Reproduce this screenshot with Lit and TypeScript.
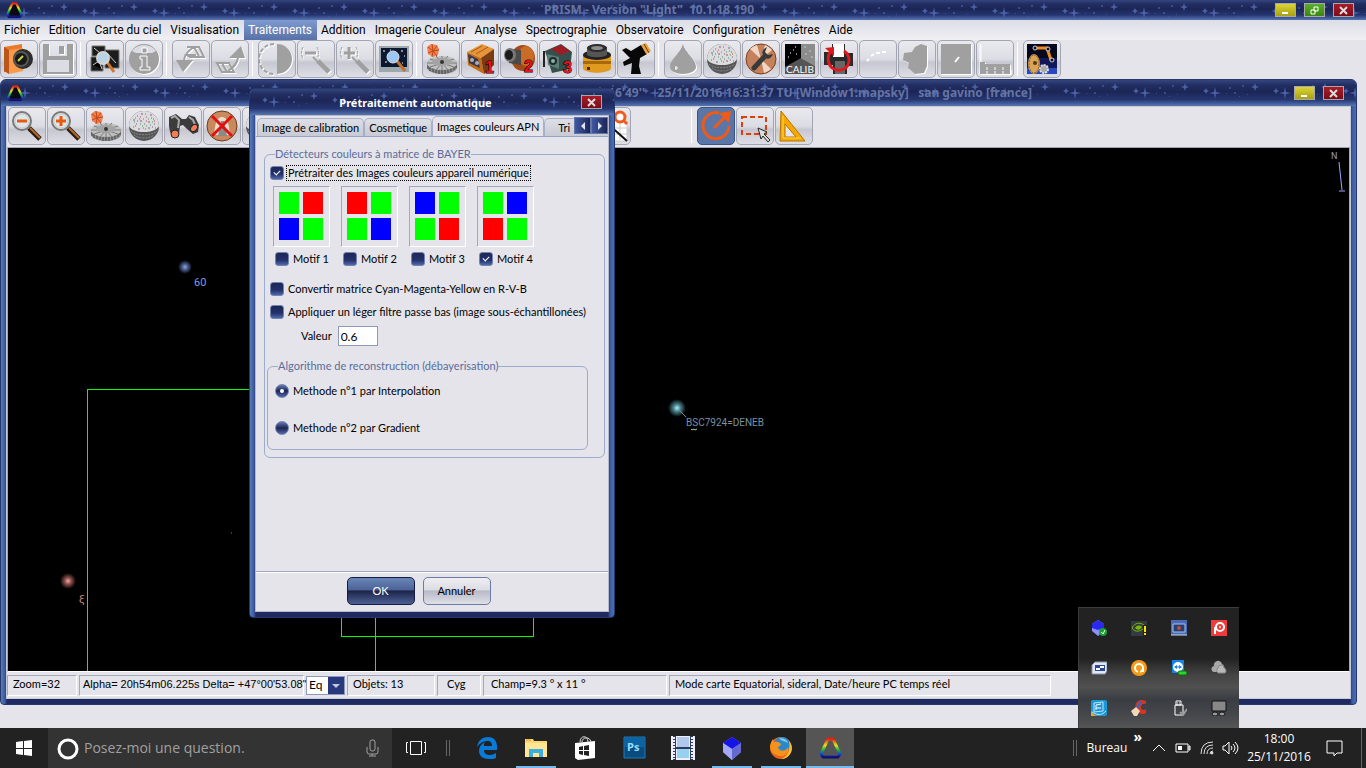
import { LitElement, html, svg, css } from 'lit'
import type { SVGTemplateResult } from 'lit'
import { classMap } from 'lit/directives/class-map.js'

type Icon = SVGTemplateResult

// 32x32 toolbar glyphs
const gear = svg`
  <path d="M2 20v5c3 8 27 8 30 0v-5z" fill="#8a8a8a" />
  <path d="M3 22v4M5 24v4M8 25v4M11 27v3M14 27v4M17 27v4M20 27v4M23 27v3M26 25v4M29 23v4M31 21v4" stroke="#444" />
  <ellipse cx="17" cy="20" rx="15" ry="7" fill="#c0c0c0" />
  <path d="M2 20h30M5 16l24 8M29 16L5 24M17 13v14M11 13l12 14M23 13L11 27" stroke="#7c7c7c" />
  <ellipse cx="17" cy="19" rx="10" ry="4" fill="#a4a4a4" />
  <ellipse cx="17" cy="19" rx="2" ry="2" fill="#333" />
  <path d="M2 4l4-3 6 1 2 4-1 6-5 2-5-3z" fill="#f08050" />
  <path d="M3 4l5 4M7 1l1 7M12 3L8 8M14 7L8 8M12 13L8 8M7 14l1-6M3 10l5-2" stroke="#c04818" />`

const sphere = svg`
  <circle cx="16" cy="16" r="15" fill="#555" />
  <path d="M1 16a15 15 0 0 1 30 0c-4 8-26 8-30 0z" fill="#dcdcdc" />
  <path d="M5 10h2M9 6h1M13 4h2M18 7h1M22 5h2M25 9h1M8 14h1M12 11h2M16 14h1M20 12h2M26 14h1M10 19h2M15 18h1M20 18h2M24 17h1M5 17h1" stroke="#8a5a9a" />
  <path d="M7 8h1M11 9h1M15 9h1M20 9h1M24 12h1M6 12h1M14 16h1M18 16h1M12 14h1M17 4h1M22 15h1M27 18h1" stroke="#3aa05a" />
  <path d="M9 11h1M18 11h1M23 8h1M12 7h1M7 16h1M17 19h1M26 11h1" stroke="#c04848" />
  <path d="M3 21c5 5 21 5 26 0M6 25c5 4 15 4 20 0" stroke="#888" fill="none" stroke-dasharray="2 1" />`

const magnifier = (sign: Icon) => svg`
  <path d="M18 18l11 11" stroke="#2a1a10" stroke-width="5" />
  <path d="M19 18l10 10" stroke="#b4682c" stroke-width="2" />
  <circle cx="11" cy="11" r="9" fill="#dfe6ea" stroke="#7a7a7a" stroke-width="2" />
  <circle cx="11" cy="11" r="7" fill="none" stroke="#c9c9c9" />
  ${sign}`

const greyMagnifier = (sign: Icon) => svg`
  <g fill="none" stroke="#a0a0a0">
    <path d="M3 4c-2 4-2 8 0 12M17 4c2 4 2 7 1 10" stroke-dasharray="3 1" />
    <path d="M18 18l11 11" stroke-width="5" />
    <path d="M13 14l5 5" stroke-width="2" />
    ${sign}
  </g>`

const icons: Record<string, Icon> = {
  open: svg`
    <path d="M1 4l18-3v26l-18 2z" fill="#e87a28" /><path d="M1 4l5 3v24l-5-3z" fill="#b9561a" />
    <path d="M6 7l14-2v23l-14 3z" fill="#f79a4c" />
    <circle cx="20" cy="16" r="10" fill="#2c2c2c" /><circle cx="18" cy="16" r="8" fill="#555" />
    <circle cx="18" cy="16" r="6" fill="#16181a" /><path d="M15 18l5-5" stroke="#c8d840" stroke-width="2" />`,
  save: svg`
    <path d="M1 1h6v12h18V1h6v30H1z" fill="#a0a0a0" /><path d="M17 3h5v8h-5z" fill="#a0a0a0" />
    <path d="M5 17h22v12H5z" fill="#dcdde4" />`,
  search: svg`
    <path d="M3 3h13v10H3zM2 14h12v14H2zM16 7h14v18H16z" fill="#1c1c1c" stroke="#777" />
    <path d="M4 22l6-4 3 8M18 10l9 10M5 5l6 5" stroke="#ccc" />
    <path d="M18 19l7 10" stroke="#d4742c" stroke-width="3" />
    <circle cx="14" cy="15" r="6" fill="#b9d4e6" stroke="#d4d4d4" stroke-width="2" />`,
  info: svg`
    <circle cx="16" cy="16" r="15" fill="#a0a0a0" /><path d="M4 8a15 15 0 0 1 24 0l-4 2H8z" fill="#dcdde4" />
    <path d="M14 5h5v5h-5zM12 13h7v11h3v3H12v-3h2v-8h-2z" fill="#a0a0a0" stroke="#fff" />`,
  undo: svg`
    <path d="M1 17h17L8 29z" fill="#a0a0a0" />
    <path d="M9 17c1-6 5-10 10-13M12 4h12l5 10H15l-3-2h9M19 4l5 9" fill="none" stroke="#a0a0a0" stroke-width="2" />`,
  redo: svg`
    <path d="M31 15H15L27 3z" fill="#a0a0a0" />
    <path d="M24 15c-1 6-5 10-10 13M3 20h12l5 9H8zM8 20l5 9" fill="none" stroke="#a0a0a0" stroke-width="2" />`,
  contrast: svg`
    <path d="M16 1a15 15 0 0 1 0 30z" fill="#a0a0a0" />
    <path d="M13 1a15 15 0 0 0 0 30" fill="none" stroke="#a0a0a0" stroke-width="2" stroke-dasharray="4 2" />`,
  greyMinus: greyMagnifier(svg`<path d="M5 10h11" stroke-width="3" />`),
  greyPlus: greyMagnifier(svg`<path d="M5 10h11M10 4v12" stroke-width="3" />`),
  view: svg`
    <path d="M1 3h30v26H1z" fill="#9ea8ae" /><path d="M3 5h26v19H3z" fill="#0b1830" />
    <path d="M5 8h2M9 12h1M23 8h2M26 13h1M7 19h2M24 20h1M12 7h1" stroke="#fff" />
    <path d="M19 18l8 10" stroke="#c4702c" stroke-width="3" />
    <circle cx="15" cy="14" r="6" fill="#9cc8f4" stroke="#ddd" />`,
  gear,
  sphere,
  camera1: svg`
    <path d="M3 9L18 1l12 5-13 9z" fill="#e89438" /><path d="M3 9l14 6 3 16L4 22z" fill="#c26c1c" />
    <path d="M17 15l13-9v16l-10 9z" fill="#7a3c10" /><path d="M4 11l10 5 2 9-11-5z" fill="#3a3a46" />
    <circle cx="8" cy="17" r="2" fill="#aab" /><circle cx="13" cy="20" r="2" fill="#aab" />
    <path d="M7 9l11-6M12 11l12-7" stroke="#a85c14" />
    <text class="num" x="21" y="30">1</text>`,
  camera2: svg`
    <ellipse cx="20" cy="15" rx="12" ry="13" fill="#a04c18" /><ellipse cx="23" cy="13" rx="8" ry="10" fill="#c86c28" />
    <path d="M6 6l12 1v15l-12-2z" fill="#4a4a4a" /><ellipse cx="7" cy="12" rx="6" ry="7" fill="#777" />
    <ellipse cx="6" cy="12" rx="4" ry="5" fill="#1c1c1c" /><text class="num" x="21" y="29">2</text>`,
  camera3: svg`
    <path d="M3 8L19 1l11 8-2 17-18 4z" fill="#35504c" /><path d="M9 6l10-4 9 6-9 4z" fill="#a01c24" />
    <path d="M5 11l12 3v12L6 22z" fill="#5c7c76" /><circle cx="11" cy="18" r="4" fill="#1c2c2c" />
    <circle cx="11" cy="18" r="2" fill="#8cb0a8" />
    <path d="M2 8v16" stroke="#222" stroke-width="2" /><text class="num" x="21" y="30">3</text>`,
  filter: svg`
    <path d="M2 12h28v14c-5 5-23 5-28 0z" fill="#e09a20" /><path d="M2 18h28v3H2z" fill="#a8680c" />
    <ellipse cx="16" cy="12" rx="14" ry="5" fill="#222" />
    <path d="M6 4h20v8c-4 3-16 3-20 0z" fill="#555" /><ellipse cx="16" cy="5" rx="10" ry="4" fill="#2c2c2c" />
    <ellipse cx="16" cy="5" rx="6" ry="2" fill="#8c8c8c" /><path d="M6 24h3v3H6z" fill="#4a2c00" />`,
  scope: svg`
    <path d="M2 7l4-2 5 3 10-6 6 9-7 4-1 8 2 8H11l1-11-8 3-1-4 7-4z" fill="#080808" />
    <path d="M21 2l5-2 5 8-5 3z" fill="#e8a040" /><path d="M24 1l5 9" stroke="#6a3c08" />`,
  drop: svg`<path d="M16 1c2 9 13 15 13 23 0 4-6 7-13 7S3 28 3 24C3 16 14 10 16 1z" fill="#a0a0a0" />
    <path d="M8 25h3M9 23v4" stroke="#fff" />`,
  wrench: svg`
    <circle cx="16" cy="16" r="15" fill="#c4815c" stroke="#7a4020" />
    <path d="M16 16L5 6a15 15 0 0 1 7-4zM16 16l4-14a15 15 0 0 1 7 5zM16 16l10 10a15 15 0 0 1-7 4z" fill="#f1d6c6" />
    <path d="M9 25l11-12" stroke="#3a3a3a" stroke-width="5" stroke-linecap="round" />
    <path d="M22 4c-5 2-6 7-3 10 3 3 7 2 9-3l-5 1-3-3z" fill="#3a3a3a" />`,
  calib: svg`
    <path d="M1 1h16v16L1 26z" fill="#000" /><path d="M17 1h14v22L17 15z" fill="#8c8c8c" />
    <path d="M1 24l16-9 14 8v8H1z" fill="#555" />
    <path d="M6 10h1M9 7h1M12 11h1M4 14h1M11 4h1" stroke="#fff" />
    <path d="M20 4h2M25 8h2M21 11h2M27 14h2" stroke="#c8c8c8" />
    <text x="2" y="30" font-size="10" fill="#fff">CALIB</text>`,
  rotate: svg`
    <path d="M9 1h13v9h8v13h-6v8H10v-9H1V9h8z" fill="#2a2a2a" /><path d="M10 1h11v13H10z" fill="#fff" />
    <path d="M12 18h10v13H12z" fill="#666" />
    <path d="M8 8c-5 6-3 15 3 18s15 0 15-9c0-4-2-7-5-9" fill="none" stroke="#e01820" stroke-width="3" />
    <path d="M2 5l9-1v9z" fill="#e01820" />`,
  curve: svg`<path d="M5 18l2-2M9 13l3-2M14 10h4M20 9h4" stroke="#fff" stroke-width="2" />`,
  blob: svg`<path d="M20 1l6 2v20l-3 7-9 1-7-6 1-5-6-3 1-7 8-1 3-5z" fill="#a0a0a0" />`,
  slit: svg`<path d="M1 1h30v30H1z" fill="#a0a0a0" /><path d="M15 19l4-5" stroke="#fff" stroke-width="2" />`,
  bars: svg`
    <path d="M1 1v30M31 26v5" stroke="#fff" /><path d="M1 19h5v2h25v10H1z" fill="#a0a0a0" />
    <path d="M8 31v-7M16 31v-8M24 31v-8" stroke="#fff" stroke-dasharray="3 1" />`,
  robot: svg`
    <path d="M1 1h30v30H1z" fill="#101858" /><path d="M1 1h30v14H1z" fill="#05081c" /><path d="M1 25h30v6H1z" fill="#2848c0" />
    <path d="M9 5h12l4 12" fill="none" stroke="#f08a1c" stroke-width="3" />
    <circle cx="9" cy="5" r="2" fill="#111" stroke="#ccd" /><circle cx="22" cy="6" r="2" fill="#111" stroke="#ccd" />
    <circle cx="26" cy="17" r="2" fill="#111" stroke="#ccd" />
    <ellipse cx="8" cy="21" rx="6" ry="10" fill="#d8a458" /><ellipse cx="8" cy="21" rx="5" ry="9" fill="none" stroke="#8a5c1c" stroke-dasharray="2 1" />
    <circle cx="9" cy="20" r="2" fill="#5c380c" /><circle cx="18" cy="26" r="4" fill="#aaa" stroke="#ddd" stroke-width="2" stroke-dasharray="2 1" />`,
  zoomOut: magnifier(svg`<path d="M6 11h10" stroke="#e85a10" stroke-width="3" />`),
  zoomIn: magnifier(svg`<path d="M6 11h10M11 6v10" stroke="#e85a10" stroke-width="3" />`),
  binoculars: svg`
    <path d="M2 7l7-3 6 5h4l3-4 6 2 4 8-1 7-5 2-6-5-4-4-3 1-1 8-5 3-4-5-1-6z" fill="#3c3c3c" />
    <path d="M4 8l4-2 4 4-1 8M22 7l4 3 3 7" stroke="#a8a8a8" fill="none" stroke-width="2" />
    <ellipse cx="8" cy="24" rx="4" ry="4" fill="#f07c58" stroke="#222" />
    <ellipse cx="27" cy="18" rx="4" ry="3" transform="rotate(-50 27 18)" fill="#f07c58" stroke="#222" />`,
  noDome: svg`
    <circle cx="16" cy="16" r="15" fill="#c88a5c" stroke="#6c3c1c" /><path d="M8 25c1-12 3-18 8-18s7 6 8 18z" fill="#ecdccc" />
    <path d="M12 26l3-15h3l3 15z" fill="#8a8a8a" /><path d="M6 6l20 20M26 6L6 26" stroke="#e01010" stroke-width="3" />`,
  chart: svg`
    <path d="M4 10h27v21H4z" fill="#fff" stroke="#ccc" /><path d="M10 12v18M17 12v18M24 12v18M4 18h27M4 24h27" stroke="#ccc" />
    <circle cx="24" cy="7" r="5" fill="#fff" stroke="#f05a1c" stroke-width="3" /><path d="M27 10l4 4" stroke="#f05a1c" stroke-width="3" />
    <path d="M12 14l19 17" stroke="#111" stroke-width="2" />`,
  turn: svg`
    <path d="M19 3A13 13 0 1 0 29 16" fill="none" stroke="#f05a14" stroke-width="3" />
    <path d="M14 18L25 7" stroke="#f05a14" stroke-width="3" /><path d="M19 3l12-2-2 12z" fill="#f05a14" />`,
  select: svg`
    <path d="M3 7h24v17H3z" fill="none" stroke="#d8400c" stroke-width="2" stroke-dasharray="5 3" />
    <path d="M19 18l9 4-3 2 6 6-2 2-5-6-2 3z" fill="#ddd" stroke="#222" />`,
  ruler: svg`
    <path d="M3 1l24 30H2z" fill="#f5a800" stroke="#b87400" /><path d="M7 14l11 13H7z" fill="#e4e4ea" stroke="#b87400" />
    <path d="M5 6v22h18" fill="none" stroke="#ffd24a" />`,
}

const rainbow = svg`
  <linearGradient id="rb" x1="0" y1="0" x2="0" y2="1">
    <stop offset="0" stop-color="#e02010" /><stop offset=".35" stop-color="#e8e020" />
    <stop offset=".6" stop-color="#18b840" /><stop offset=".85" stop-color="#1840c8" /><stop offset="1" stop-color="#101070" />
  </linearGradient>
  <path d="M10 3h5l7 15-2 3H5l-2-3z" fill="#0a0a14" stroke="url(#rb)" stroke-width="3" stroke-linejoin="round" />`

const appRainbow = svg`<path d="M10 3h5l7 15-2 3H5l-2-3z" fill="#555" stroke="url(#rb)" stroke-width="3" stroke-linejoin="round" />`

const cube = svg`
  <path d="M12 1l9 6v9l-9 8-9-8V7z" fill="#8c90f0" /><path d="M12 1l9 6-9 6-9-6z" fill="#1414e8" />
  <path d="M3 7l9 6v11l-9-8z" fill="#a4a8f8" /><path d="M12 13l9-6v9l-9 8z" fill="#6468d0" />`

// 24x24 taskbar glyphs
const apps: { name: string; icon: Icon; open?: boolean; active?: boolean }[] = [
  {
    name: 'Edge',
    icon: svg`<path d="M2 11C3 4 8 1 13 1c6 0 9 4 9 10v3H9c0 4 3 5 6 5 2 0 4-1 6-2v5c-2 1-4 1-7 1C8 23 4 20 4 15c0-4 2-7 6-9-1 1-1 2-1 4h8c0-3-1-5-5-5-4 0-8 3-10 6z" fill="#0a7ad8" />`,
  },
  {
    name: 'Explorateur',
    open: true,
    icon: svg`<path d="M1 3h8l1 2h13v16H1z" fill="#f8d870" /><path d="M1 7h22v14H1z" fill="#ffe594" />
      <path d="M5 21v-8h14v8h-4v-4H9v4z" fill="#3aaee0" /><path d="M2 4h5" stroke="#e8a020" />`,
  },
  {
    name: 'Store',
    icon: svg`<path d="M2 7l20-2v17L5 24 2 22z" fill="#fff" /><path d="M7 6c0-7 8-7 8 0M9 6c0-5 8-6 9 0" fill="none" stroke="#ddd" />
      <path d="M6 11l4-1v4H6zM11 10l5-1v5h-5zM6 15h4v4l-4-1zM11 15h5v5l-5-1z" fill="#222" />`,
  },
  {
    name: 'Photoshop',
    icon: svg`<path d="M2 1h21v21H2z" fill="#0a4c80" stroke="#1c7ab8" /><path d="M3 2h19v9H3z" fill="#0c64a4" />
      <text x="5" y="15" font-size="11" font-weight="700" fill="#9cdcfc">Ps</text>`,
  },
  {
    name: 'Films',
    icon: svg`<path d="M0 0h24v24H0z" fill="#eef" /><path d="M2 0h3v24H2zM19 0h3v24h-3z" fill="#2c3c60" />
      <path d="M3 1v22M21 1v22" stroke="#eef" stroke-width="2" stroke-dasharray="2 1" />
      <path d="M6 1h12v10H6z" fill="#b0c8ec" /><path d="M6 13h12v9H6z" fill="#98d0f0" /><path d="M5 12h14" stroke="#2c3c60" stroke-width="2" />`,
  },
  { name: 'Cube', icon: cube, open: true },
  {
    name: 'Firefox',
    open: true,
    icon: svg`<circle cx="12" cy="12" r="11" fill="#e8641c" /><circle cx="13" cy="9" r="8" fill="#2a88c8" />
      <path d="M10 2c4 0 8 1 9 5-3-2-6-1-9-5z" fill="#7cc8e8" />
      <path d="M1 10c1-4 2-6 3-7l1 3c4-1 7 1 7 3l-3 2c1 5 8 5 10 0 2 5-3 10-8 9C5 19 1 16 1 10z" fill="#f5921c" />
      <path d="M20 5c3 4 4 9 1 13-2 3-5 5-9 5 6-2 10-8 8-18z" fill="#f8c030" />`,
  },
  { name: 'PRISM', icon: appRainbow, open: true, active: true },
]

// 16x16 notification area glyphs
const tray: Icon[] = [
  svg`<path d="M7 0l6 4v7l-6 5-6-5V4z" fill="#8a90f8" /><path d="M7 0l6 4v4l-6 2-6-2V4z" fill="#2828f0" />
    <circle cx="12" cy="12" r="4" fill="#18a030" /><path d="M10 12l2 2 2-4" stroke="#fff" fill="none" />`,
  svg`<path d="M0 1h16v15H0z" fill="#343a44" /><path d="M1 8c3-6 9-6 13-2-3 6-10 7-13 2z" fill="none" stroke="#76b900" />
    <path d="M4 8c2-3 5-3 7-1-2 3-4 4-7 1z" fill="#76b900" /><path d="M12 5h4v11h-4z" fill="#222" />
    <path d="M14 6v6M14 13v2" stroke="#ffe000" stroke-width="2" />`,
  svg`<path d="M0 0h16v15H0z" fill="#4a6cb8" /><path d="M2 4h12v8H2z" fill="#28406c" stroke="#a8c0e8" />
    <circle cx="8" cy="8" r="2" fill="#c04848" /><path d="M0 15h16" stroke="#c8d8f0" />`,
  svg`<path d="M0 0h16v16H0z" fill="#ee3c3c" /><circle cx="9" cy="7" r="4" fill="none" stroke="#fff" stroke-width="2" />
    <circle cx="9" cy="7" r="1" fill="#fff" /><path d="M4 14V7" stroke="#fff" stroke-width="2" />`,
  svg`<path d="M1 5l3-3h12v9l-2 3H1z" fill="#dfe6f4" stroke="#8a94a8" /><path d="M4 5h10v6H4z" fill="#2c4890" />
    <path d="M5 9h4M9 7h4" stroke="#fff" stroke-width="2" />`,
  svg`<circle cx="8" cy="8" r="8" fill="#f59a14" /><circle cx="8" cy="8" r="4" fill="none" stroke="#fff" stroke-width="2" />
    <path d="M12 8v4" stroke="#fff" stroke-width="2" /><path d="M8 10v4" stroke="#f59a14" stroke-width="2" />`,
  svg`<path d="M1 0h12v13H1z" fill="#1484e8" /><circle cx="7" cy="7" r="5" fill="#fff" />
    <path d="M3 7l3-2v4zM11 7L8 5v4z" fill="#1484e8" /><path d="M4 7h6" stroke="#1484e8" />
    <rect x="7" y="11" width="9" height="4" rx="2" fill="#28d828" stroke="#0c6c0c" />`,
  svg`<path d="M4 12a3 3 0 0 1-1-6 4 4 0 0 1 8-2 3 3 0 0 1 2 3 3 3 0 0 1 0 5z" fill="#a8a8a8" />
    <path d="M7 13a3 3 0 0 1 0-5 3 3 0 0 1 6 0 3 3 0 0 1 1 5z" fill="#b8b8b8" stroke="#888" />`,
  svg`<rect width="16" height="16" rx="2" fill="#1c98d8" /><path d="M3 3l9-1v9l-9 1zM1 12c6 4 10 3 14-1" fill="none" stroke="#bfe6f8" />
    <path d="M5 5l5-1M5 8h5M5 5v5" stroke="#fff" /><path d="M0 10c1 4 4 6 8 6H0z" fill="#f0a828" />`,
  svg`<path d="M15 1C8-2 3 3 5 8s6 8 10 5V9c-2 2-5 1-5-2s3-4 5-3z" fill="#d83420" />
    <path d="M9 1l2 1-4 7-2-2z" fill="#2c6cc0" /><path d="M0 11l5-4 4 4-3 5H3z" fill="#f0d8b8" />`,
  svg`<path d="M5 1h5v4H5zM4 5h8v10H4z" fill="none" stroke="#fff" /><path d="M6 3h1M8 3h1" stroke="#fff" />
    <path d="M9 12l3 3 4-6" fill="none" stroke="#999" stroke-width="2" />`,
  svg`<path d="M1 1h14v10H1z" fill="#888" stroke="#111" /><ellipse cx="4" cy="14" rx="3" ry="2" fill="#999" stroke="#111" />
    <ellipse cx="11" cy="14" rx="3" ry="2" fill="#999" stroke="#111" />`,
]

const menus = [
  'Fichier',
  'Edition',
  'Carte du ciel',
  'Visualisation',
  'Traitements',
  'Addition',
  'Imagerie Couleur',
  'Analyse',
  'Spectrographie',
  'Observatoire',
  'Configuration',
  'Fenêtres',
  'Aide',
]

const mainTools = [
  ['open', 'save'],
  ['search', 'info'],
  ['undo', 'redo'],
  ['contrast', 'greyMinus', 'greyPlus', 'view'],
  ['gear', 'camera1', 'camera2', 'camera3', 'filter', 'scope'],
  ['drop', 'sphere', 'wrench', 'calib', 'rotate', 'curve', 'blob', 'slit', 'bars'],
  ['robot'],
]

const disabledTools = ['save', 'info', 'undo', 'redo', 'contrast', 'greyMinus', 'greyPlus', 'drop', 'blob', 'slit', 'bars']

const mapTools = [
  ['zoomOut', 'zoomIn', 'gear', 'sphere', 'binoculars', 'noDome', 'sphere', 'info', 'search', 'view', 'gear', 'wrench', 'filter', 'scope', 'rotate', 'chart'],
  ['turn', 'select', 'ruler'],
]

const bayer = [
  ['g', 'r', 'b', 'g'],
  ['r', 'g', 'g', 'b'],
  ['b', 'g', 'g', 'r'],
  ['g', 'b', 'r', 'g'],
]

// Night sky pattern behind the captions
export class StarCaption extends LitElement {
  static styles = css`
    :host {
      display: block;
      position: relative;
      background: linear-gradient(#34457f, #222e62 20%, #1c2655 45%, #253570 75%, #5676b4);
    }

    .sky {
      position: absolute;
      inset: 0;
      width: 100%;
      height: 100%;
    }

    .content {
      position: relative;
      display: flex;
      align-items: center;
      height: 100%;
      box-sizing: border-box;
    }
  `

  render() {
    return html`
      <svg class="sky" aria-hidden="true">
        <defs>
          <pattern id="stars" width="70" height="27" patternUnits="userSpaceOnUse">
            <g fill="#4a60a8">
              <path d="M24 7l1 5 5 1-5 1-1 5-1-5-5-1 5-1z" />
              <path d="M64 3l1 3 3 1-3 1-1 3-1-3-3-1 3-1z" />
              <path d="M15 8l1 2 2 1-2 1-1 2-1-2-2-1 2-1z" />
              <path d="M38 7h2v2h-2zM43 12h2v2h-2zM51 5h2v2h-2zM35 13h1v1h-1zM48 16h1v1h-1zM56 14h1v1h-1z" opacity=".6" />
            </g>
          </pattern>
        </defs>
        <rect width="100%" height="100%" fill="url(#stars)" />
      </svg>
      <div class="content"><slot></slot></div>
    `
  }
}

customElements.define('star-caption', StarCaption)

export class AppRoot extends LitElement {
  static styles = css`
    :host {
      display: flex;
      flex-direction: column;
      height: 100vh;
      position: relative;
      overflow: hidden;
      background: #e4e4ea;
      color: #000;
      font: 11px/14px Lato, 'Liberation Sans', sans-serif;
    }

    button,
    input,
    select {
      font: inherit;
      color: inherit;
      margin: 0;
      padding: 0;
      border: 0;
      border-radius: 0;
      background: none;
      box-sizing: border-box;
    }

    svg {
      display: block;
    }

    /* captions */
    .caption {
      flex: 0 0 auto;
      height: 20px;
      color: #6474a4;
      font: 700 12px/16px 'Noto Sans', 'Open Sans', sans-serif;
    }

    .caption .text {
      flex: 1;
      text-align: center;
      white-space: pre;
    }

    .logo {
      width: 18px;
      height: 18px;
      margin-left: 5px;
    }

    .window-buttons {
      display: flex;
      gap: 8px;
      margin-right: 12px;
    }

    .win {
      width: 21px;
      height: 14px;
      border: 1px solid #a8a8a8;
      background: linear-gradient(#a81c28, #7c0c18);
    }

    .win svg {
      margin: auto;
    }

    .win.min {
      background: linear-gradient(#dcd438, #a8a010);
    }

    .win.max {
      background: linear-gradient(#58b028, #3c8410);
    }

    /* menu */
    .menu {
      display: flex;
      height: 20px;
      background: linear-gradient(#dcdde6, #f0f0f4);
      font: 12px/20px Roboto, 'Open Sans', sans-serif;
    }

    .menu button {
      padding: 0 5px 0 4px;
      white-space: nowrap;
    }

    .menu .on {
      color: #fff;
      background: linear-gradient(#7e9ace, #5672a8);
    }

    /* toolbars */
    .toolbar {
      display: flex;
      gap: 9px;
      padding: 0 0 1px;
    }

    .group {
      display: flex;
      gap: 1px;
      position: relative;
    }

    .group + .group::before {
      content: '';
      position: absolute;
      left: -6px;
      top: 2px;
      bottom: 2px;
      border-left: 1px solid #fff;
    }

    .tool {
      width: 38px;
      height: 38px;
      border: 1px solid #a4a5b2;
      border-radius: 5px;
      padding: 2px;
      background: linear-gradient(#e9e9ee, #dcdde4 50%, #c6c7d0 60%, #dedfe6);
    }

    .tool svg {
      width: 32px;
      height: 32px;
      overflow: visible;
    }

    .tool.off svg {
      filter: drop-shadow(1px 1px 0 #fff);
    }

    .tool.on {
      background: #5a76a8;
      border-color: #3c5488;
    }

    .num {
      font: 700 16px 'Liberation Sans', sans-serif;
      fill: #f01018;
      stroke: #000;
      stroke-width: 1px;
      paint-order: stroke;
    }

    /* map window */
    .desktop {
      flex: 1;
      display: flex;
      min-height: 0;
      padding: 0 9px 23px 0;
    }

    .frame {
      display: flex;
      flex-direction: column;
      box-sizing: border-box;
      border: 1px solid #24386c;
      border-radius: 6px 6px 4px 4px;
      background: linear-gradient(90deg, #5a7cb8, #3c58a0 4px, #1e2a60 6px, #1e2a60 calc(100% - 6px), #3c58a0 calc(100% - 4px), #4a70b8);
      padding: 0 5px 5px;
      overflow: hidden;
    }

    .map-window {
      flex: 1;
      min-width: 0;
    }

    .map-window .caption {
      height: 26px;
      margin: 0 -5px;
    }

    .map-window .caption .text {
      text-align: right;
      padding-right: 262px;
    }

    .map-body {
      flex: 1;
      min-height: 0;
      display: flex;
      flex-direction: column;
      border: 1px solid #c8cad4;
      background: #e4e4ea;
    }

    .map-body .toolbar {
      gap: 66px;
      padding: 0 0 2px 1px;
    }

    .sky-map {
      flex: 1;
      min-height: 0;
      position: relative;
      overflow: hidden;
      background: #000;
      border: 1px solid #a4a5b2;
      border-bottom-color: #fff;
      font-family: Roboto, 'Liberation Sans', sans-serif;
    }

    .sky-map .chart {
      position: absolute;
      left: 0;
      top: 0;
      width: 100%;
      height: 100%;
    }

    .sky-map .north {
      position: absolute;
      right: 0;
      top: 0;
    }

    .status {
      display: flex;
      align-items: center;
      gap: 2px;
      height: 26px;
      background: #e4e4ea;
    }

    .cell {
      box-sizing: border-box;
      height: 21px;
      padding: 0 5px;
      line-height: 16px;
      border: 1px solid;
      border-color: #a4a8bc #fff #fff #a4a8bc;
      white-space: nowrap;
      flex: 0 0 auto;
    }

    .w70 {
      width: 70px;
    }
    .w225 {
      width: 225px;
      padding: 0 3px;
      font-family: 'Liberation Sans', sans-serif;
    }
    .w88 {
      width: 88px;
    }
    .w44 {
      width: 44px;
      padding-left: 9px;
    }
    .w184 {
      width: 184px;
      padding-left: 7px;
    }
    .w382 {
      width: 382px;
    }

    .combo {
      display: flex;
      height: 19px;
      width: 39px;
      position: relative;
      border: 1px solid #8c98bc;
      box-sizing: border-box;
      background: #fff;
    }

    .combo select {
      appearance: none;
      width: 100%;
      padding-left: 2px;
      font-size: 12px;
    }

    .combo svg {
      position: absolute;
      right: 0;
      top: 0;
      pointer-events: none;
    }

    /* dialog */
    .dialog {
      position: absolute;
      left: 249px;
      top: 88px;
      width: 366px;
      height: 530px;
    }

    .dialog .caption {
      height: 26px;
      margin: 0 -5px;
      color: #fff;
      font-size: 11px;
    }

    .dialog .caption .text {
      padding-top: 2px;
    }

    .panel {
      flex: 1;
      display: flex;
      flex-direction: column;
      background: #e4e4ea;
      border: 1px solid #b8bac6;
      min-height: 0;
    }

    .tabs {
      display: flex;
      align-items: flex-end;
      height: 20px;
      position: relative;
      border-bottom: 1px solid #98a4c4;
      padding-left: 1px;
      overflow: hidden;
    }

    .tabs button {
      height: 18px;
      padding: 0 4px;
      border: 1px solid #a8b0c8;
      border-bottom: 0;
      border-radius: 5px 5px 0 0;
      background: linear-gradient(#dedfe6, #c8cad4);
      white-space: nowrap;
      flex: 0 0 auto;
    }

    .tabs .current {
      height: 20px;
      background: #e4e4ea;
    }

    .tabs .tri {
      width: 74px;
      text-align: left;
      padding-left: 13px;
    }

    .tabs .scroll {
      position: absolute;
      right: 0;
      top: 1px;
      display: flex;
    }

    .tabs .scroll button {
      width: 17px;
      height: 17px;
      padding: 0;
      border: 1px solid #6476a8;
      border-radius: 0;
      background: linear-gradient(90deg, #4058a0, #1c2655);
    }

    .scroll svg {
      margin: auto;
    }

    .page {
      flex: 1;
      padding: 10px 3px 0 8px;
      border-bottom: 1px solid #a4a8bc;
    }

    fieldset {
      min-width: 0;
      margin: 0;
      padding: 0;
      border: 1px solid #9caccc;
      border-radius: 6px;
    }

    legend {
      margin-left: 8px;
      padding: 0;
      color: #5a6c9c;
    }

    label {
      display: flex;
      align-items: center;
      gap: 3px;
      white-space: nowrap;
    }

    label span {
      padding: 0 1px;
    }

    .focused span {
      outline: 1px dotted #000;
    }

    .main-set {
      padding: 5px 16px 7px 2px;
    }

    .main-set > label,
    .options label {
      padding-left: 3px;
    }

    input[type='checkbox'],
    input[type='radio'] {
      appearance: none;
      flex: 0 0 auto;
      display: grid;
      place-items: center;
      width: 14px;
      height: 14px;
      border: 1px solid #7484b0;
      border-radius: 3px;
      background: linear-gradient(#1c2655, #24326c 60%, #5068a8);
    }

    input[type='radio'] {
      border-radius: 50%;
      background: linear-gradient(#6478b0, #1c2655 50%, #5068a8);
    }

    input[type='checkbox']:checked::before {
      content: '';
      width: 6px;
      height: 4px;
      margin-bottom: 2px;
      border: solid #fff;
      border-width: 0 0 1px 1px;
      box-sizing: border-box;
      transform: rotate(-45deg);
    }

    input[type='radio']:checked::before {
      content: '';
      width: 4px;
      height: 4px;
      border-radius: 50%;
      background: #fff;
    }

    .motifs {
      display: flex;
      gap: 11px;
      padding: 6px 0 16px 6px;
    }

    .motif {
      width: 57px;
      display: flex;
      flex-direction: column;
      gap: 5px;
    }

    .motif label {
      padding-left: 2px;
    }

    .tile {
      display: grid;
      grid-template-columns: 20px 20px;
      grid-template-rows: 22px 22px;
      gap: 4px;
      padding: 5px;
      border: 1px solid;
      border-color: #a4a8bc #fff #fff #a4a8bc;
      height: 49px;
    }

    .r {
      background: #f00;
    }
    .g {
      background: #0f0;
    }
    .b {
      background: #00f;
    }

    .main-set .value {
      padding: 7px 0 13px 34px;
      gap: 6px;
    }

    .value input {
      width: 40px;
      height: 20px;
      padding-left: 2px;
      border: 1px solid #8c98bc;
      background: #fff;
      font-size: 12px;
    }

    .stack {
      display: flex;
      flex-direction: column;
      gap: 9px;
    }

    .methods {
      padding: 11px 7px 14px;
    }

    .methods legend {
      margin-left: 3px;
    }

    .methods .stack {
      gap: 23px;
    }

    .actions {
      display: flex;
      justify-content: center;
      gap: 8px;
      padding: 4px 27px 6px 0;
      border-top: 1px solid #fff;
    }

    .actions button {
      width: 68px;
      height: 28px;
      border: 1px solid #6c7ca8;
      border-radius: 5px;
      background: linear-gradient(#eeeef2, #dcdde4 45%, #b8bac8 50%, #dedfe6);
    }

    .actions .ok {
      color: #fff;
      border-color: #141c44;
      background: linear-gradient(#6a86b8, #4c6498 45%, #1c2448 50%, #4c6094);
    }

    /* taskbar */
    .taskbar {
      display: flex;
      align-items: stretch;
      height: 40px;
      background: #222;
      color: #fff;
      font: 12px/18px 'Open Sans', 'Noto Sans', sans-serif;
    }

    .taskbar button {
      display: grid;
      place-items: center;
      width: 48px;
    }

    .search {
      display: flex;
      align-items: center;
      gap: 5px;
      width: 344px;
      padding: 0 13px 0 8px;
      box-sizing: border-box;
      background: #333;
      font-size: 14px;
    }

    .search input {
      flex: 1;
      min-width: 0;
    }

    .search input::placeholder {
      color: #a0a0a0;
      opacity: 1;
    }

    .grip {
      width: 2px;
      height: 16px;
      margin: auto 0;
      border: solid #666;
      border-width: 0 1px;
    }

    .apps {
      display: flex;
      gap: 1px;
      margin-left: 13px;
      flex: 1;
    }

    .taskbar .task-view {
      margin-right: 6px;
    }

    .taskbar .apps button {
      position: relative;
    }

    .apps .open::after {
      content: '';
      position: absolute;
      left: 4px;
      right: 4px;
      bottom: 0;
      height: 2px;
      background: #76b9ed;
    }

    .apps .active {
      background: #555;
    }

    .apps .active::after {
      left: 0;
      right: 0;
    }

    .taskbar .mini {
      width: 24px;
    }

    .bureau {
      padding: 11px 0 0 10px;
    }

    .more {
      padding: 0 5px 0 6px;
      font-size: 14px;
      font-weight: 700;
    }

    .clock {
      width: 72px;
      text-align: center;
      padding-top: 2px;
      white-space: pre-line;
    }

    .taskbar .notes {
      width: 38px;
      margin-right: 8px;
    }

    .show-desktop {
      width: 4px;
      border-left: 1px solid #666;
    }

    .tray {
      position: absolute;
      right: 127px;
      bottom: 40px;
      display: grid;
      grid-template-columns: repeat(4, 40px);
      grid-auto-rows: 40px;
      border: 1px solid #3c3c3c;
      border-width: 1px 0 0 1px;
      background: linear-gradient(#222, #222 42%, #444 56%, #505050 66%, #3a3d42 76%, #44464a 88%, #555);
    }

    .tray button {
      display: grid;
      place-items: center;
    }
  `

  toolbar(groups: string[][]) {
    return html`<div class="toolbar" role="toolbar">
      ${groups.map(
        (group) => html`<div class="group">
          ${group.map(
            (name) => html`<button class=${classMap({ tool: true, on: name === 'turn', off: disabledTools.includes(name) })} aria-label=${name}>
              <svg viewBox="0 0 32 32">${icons[name]}</svg>
            </button>`
          )}
        </div>`
      )}
    </div>`
  }

  winButton(kind: string) {
    const glyphs: Record<string, Icon> = {
      min: svg`<path d="M2 8h6" stroke="#fff" stroke-width="2" />`,
      max: svg`<path d="M5 2h4v4H5zM2 5h4v4H2z" fill="none" stroke="#fff" />`,
      close: svg`<path d="M2 2l7 7M9 2L2 9" stroke="#ddd" stroke-width="2" />`,
    }
    return html`<button class="win ${kind}" aria-label=${kind}><svg width="11" height="11">${glyphs[kind]}</svg></button>`
  }

  logo() {
    return html`<svg class="logo" viewBox="0 0 24 24">${rainbow}</svg>`
  }

  mapWindow() {
    return html`<section class="frame map-window">
      <star-caption class="caption">
        ${this.logo()}<span class="text">16'49''    25/11/2016 16:31:37 TU [Window1.mapsky]   san gavino [france]</span>
        <div class="window-buttons">${this.winButton('min')}${this.winButton('close')}</div>
      </star-caption>
      <div class="map-body">
        ${this.toolbar(mapTools)}
        <div class="sky-map">
          <svg class="chart">
            <defs>
              <radialGradient id="blue"><stop offset="0" stop-color="#8ca8e8" /><stop offset=".4" stop-color="#4c5c8c" /><stop offset="1" stop-color="#000" /></radialGradient>
              <radialGradient id="red"><stop offset="0" stop-color="#f8a8a0" /><stop offset=".4" stop-color="#8c504c" /><stop offset="1" stop-color="#000" /></radialGradient>
              <radialGradient id="cyan"><stop offset="0" stop-color="#b0f0f8" /><stop offset=".4" stop-color="#488088" /><stop offset="1" stop-color="#000" /></radialGradient>
            </defs>
            <circle cx="177" cy="119" r="7" fill="url(#blue)" />
            <text x="186" y="138" font-size="11" fill="#7c9ce8">60</text>
            <circle cx="60" cy="433" r="8" fill="url(#red)" />
            <text x="71" y="455" font-size="11" fill="#d89080">ξ</text>
            <path d="M367.5 2000V241.5H79.5V2000M333.5 400V488.5H525.5V400" fill="none" stroke="#00ff00" shape-rendering="crispEdges" />
            <path d="M223 385h1" stroke="#40a040" />
            <circle cx="669" cy="260" r="9" fill="url(#cyan)" />
            <path d="M671 262l7 7" stroke="#888" />
            <text x="678" y="278" font-size="10" fill="#7890a0">BSC7924=DENEB</text>
            <path d="M683 281l1 1 2-1 1 1 2-1" fill="none" stroke="#a0c8a8" />
          </svg>
          <svg class="north" width="24" height="50">
            <text x="6" y="11" font-size="9" fill="#9c9cd8">N</text>
            <path d="M14 14l3 28M14 43h6" stroke="#a4a4ff" />
          </svg>
        </div>
        <footer class="status">
          <div class="cell w70">Zoom=32</div>
          <div class="cell w225">Alpha= 20h54m06.225s Delta= +47°00'53.08"</div>
          <div class="combo">
            <select aria-label="Coordonnées"><option>Eq</option></select>
            <svg width="16" height="17"><rect width="16" height="17" fill="#28387c" /><path d="M4 7h8l-4 4z" fill="#c0c8e0" /></svg>
          </div>
          <div class="cell w88">Objets: 13</div>
          <div class="cell w44">Cyg</div>
          <div class="cell w184">Champ=9.3 ° x 11 °</div>
          <div class="cell w382">Mode carte Equatorial, sideral, Date/heure PC temps réel</div>
        </footer>
      </div>
    </section>`
  }

  dialog() {
    return html`<section class="frame dialog" role="dialog" aria-label="Prétraitement automatique">
      <star-caption class="caption">
        <span class="text">Prétraitement automatique</span>
        <div class="window-buttons">${this.winButton('close')}</div>
      </star-caption>
      <div class="panel">
        <div class="tabs" role="tablist">
          <button role="tab">Image de calibration</button>
          <button role="tab">Cosmetique</button>
          <button role="tab" class="current">Images couleurs APN</button>
          <button role="tab" class="tri">Tri</button>
          <div class="scroll">
            <button aria-label="Précédent"><svg width="8" height="8"><path d="M6 0v8L2 4z" fill="#dfe4f4" /></svg></button>
            <button aria-label="Suivant"><svg width="8" height="8"><path d="M2 0v8l4-4z" fill="#dfe4f4" /></svg></button>
          </div>
        </div>
        <div class="page">
          <fieldset class="main-set">
            <legend>Détecteurs couleurs à matrice de BAYER</legend>
            <label class="focused"><input type="checkbox" checked /><span>Prétraiter des Images couleurs appareil numérique</span></label>
            <div class="motifs">
              ${bayer.map(
                (cells, i) => html`<div class="motif">
                  <div class="tile">${cells.map((c) => html`<i class=${c}></i>`)}</div>
                  <label><input type="checkbox" ?checked=${i === 3} /><span>Motif ${i + 1}</span></label>
                </div>`
              )}
            </div>
            <div class="stack options">
              <label><input type="checkbox" /><span>Convertir matrice Cyan-Magenta-Yellow en R-V-B</span></label>
              <label><input type="checkbox" /><span>Appliquer un léger filtre passe bas (image sous-échantillonées)</span></label>
            </div>
            <label class="value">Valeur <input type="text" value="0.6" /></label>
            <fieldset class="methods">
              <legend>Algorithme de reconstruction (débayerisation)</legend>
              <div class="stack">
                <label><input type="radio" name="methode" checked /><span>Methode n°1 par Interpolation</span></label>
                <label><input type="radio" name="methode" /><span>Methode n°2 par Gradient</span></label>
              </div>
            </fieldset>
          </fieldset>
        </div>
        <div class="actions">
          <button class="ok">OK</button>
          <button>Annuler</button>
        </div>
      </div>
    </section>`
  }

  taskbar() {
    return html`<footer class="taskbar">
      <button aria-label="Démarrer">
        <svg width="16" height="16" fill="#fff"><path d="M0 2l7-1v7H0zM8 1l8-1v8H8zM0 9h7v6l-7-1zM8 9h8v7l-8-1z" /></svg>
      </button>
      <div class="search">
        <svg width="23" height="23"><circle cx="12" cy="12" r="9" fill="none" stroke="#fff" stroke-width="3" /></svg>
        <input type="text" placeholder="Posez-moi une question." aria-label="Recherche" />
        <svg width="14" height="18" fill="none" stroke="#a0a0a0"><rect x="5" y="1" width="5" height="11" rx="2" /><path d="M2 8v5q0 2 2 2h7q2 0 2-2V8M7 15v2M4 17h7" /></svg>
      </div>
      <button class="task-view" aria-label="Vue des tâches">
        <svg width="22" height="16" fill="none" stroke="#fff"><path d="M5.500 1.500h11v13h-11zM3 2.500H1.500v10H3M19 2.500h1.500v10H19" /></svg>
      </button>
      <div class="grip"></div>
      <nav class="apps">
        ${apps.map(
          (app) => html`<button class=${classMap({ open: !!app.open, active: !!app.active })} aria-label=${app.name}>
            <svg width="24" height="24">${app.icon}</svg>
          </button>`
        )}
      </nav>
      <div class="grip"></div>
      <span class="bureau">Bureau</span>
      <span class="more">»</span>
      <button class="mini" aria-label="Icônes cachées"><svg width="14" height="8"><path d="M1 7l6-6 6 6" fill="none" stroke="#fff" /></svg></button>
      <button class="mini" aria-label="Batterie">
        <svg width="16" height="10"><path d="M1 1h12v8H1zM14 3h1v4h-1z" fill="none" stroke="#fff" /><path d="M3 3h4v4H3z" fill="#fff" /></svg>
      </button>
      <button class="mini" aria-label="Réseau">
        <svg width="14" height="14" fill="none" stroke="#ddd"><path d="M1 13Q1 1 13 1M4 13Q4 4 13 4M7 13Q7 7 13 7M10 13q0-3 3-3" /><circle cx="12" cy="12" r="1" fill="#fff" /></svg>
      </button>
      <button class="mini" aria-label="Volume">
        <svg width="18" height="14" fill="none" stroke="#fff"><path d="M1 5h2l4-4v12L3 9H1zM9 5q2 2 0 4M11 3q4 4 0 8M13 1q6 6 0 12" /></svg>
      </button>
      <time class="clock">18:00
25/11/2016</time>
      <button class="notes" aria-label="Notifications">
        <svg width="17" height="17"><path d="M1 1h15v12h-5l-3 3v-3H1z" fill="none" stroke="#fff" /></svg>
      </button>
      <div class="show-desktop"></div>
    </footer>`
  }

  render() {
    return html`
      <star-caption class="caption">
        ${this.logo()}<span class="text">PRISM - Version "Light"  10.1.18.190</span>
        <div class="window-buttons">${this.winButton('min')}${this.winButton('max')}${this.winButton('close')}</div>
      </star-caption>
      <nav class="menu">
        ${menus.map((name) => html`<button class=${name === 'Traitements' ? 'on' : ''}>${name}</button>`)}
      </nav>
      ${this.toolbar(mainTools)}
      <main class="desktop">${this.mapWindow()}</main>
      ${this.dialog()}
      <div class="tray">${tray.map((icon) => html`<button aria-label="Notification"><svg width="16" height="16">${icon}</svg></button>`)}</div>
      ${this.taskbar()}
    `
  }
}

customElements.define('app-root', AppRoot)
